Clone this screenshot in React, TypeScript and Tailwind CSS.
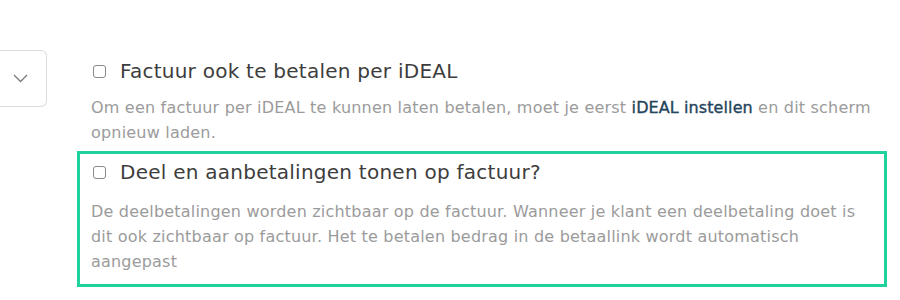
import React from 'react';

const Checkbox: React.FC = () => (
    <span className="inline-block w-[13px] h-[13px] rounded-[3px] border border-[#8a8a8a] bg-white shrink-0" />
);

const App: React.FC = () => {
    return (
        <div className="w-[900px] h-[300px] bg-white overflow-hidden flex items-start" style={{ fontFamily: '"DejaVu Sans", "Noto Sans", sans-serif' }}>
            {/* select stub, cut off by the left edge */}
            <div className="mt-[50px] w-[47px] h-[57px] border-y border-r border-[#dcdcdc] rounded-r-md flex items-center pl-[13px] shrink-0">
                <svg width="15" height="9" viewBox="0 0 15 9" fill="none">
                    <path d="M1 1l6.5 6.5L14 1" stroke="#7a7a7a" strokeWidth="1.3" />
                </svg>
            </div>

            <div className="ml-[30px] mt-[56px] w-[810px] flex flex-col gap-[3px]">
                <div className="border-[3px] border-transparent pl-[11px] pr-[5px]">
                    <label className="flex items-center gap-[14px] h-[24px] pl-[2px]">
                        <Checkbox />
                        <span className="text-[20px] tracking-[0.25px] text-[#3d3d3d] leading-[24px]">Factuur ook te betalen per iDEAL</span>
                    </label>
                    <p className="mt-[12px] text-[16px] tracking-[0.2px] leading-[25px] text-[#9b9b9b] whitespace-nowrap">
                        Om een factuur per iDEAL te kunnen laten betalen, moet je eerst{' '}
                        <a className="text-[#24445a] tracking-[0.1px] [-webkit-text-stroke:0.35px_#24445a]">iDEAL instellen</a> en dit scherm
                        <br />
                        opnieuw laden.
                    </p>
                </div>

                <div className="border-[3px] border-[#1fd19d] pl-[11px] pr-[20px] pt-[6px] pb-[10px]">
                    <label className="flex items-center gap-[14px] h-[24px] pl-[2px]">
                        <Checkbox />
                        <span className="text-[20px] tracking-[0.25px] text-[#3d3d3d] leading-[24px]">Deel en aanbetalingen tonen op factuur?</span>
                    </label>
                    <p className="mt-[15px] text-[16px] tracking-[0.2px] leading-[25px] text-[#9b9b9b] whitespace-nowrap">
                        De deelbetalingen worden zichtbaar op de factuur. Wanneer je klant een deelbetaling doet is
                        <br />
                        dit ook zichtbaar op factuur. Het te betalen bedrag in de betaallink wordt automatisch
                        <br />
                        aangepast
                    </p>
                </div>
            </div>
        </div>
    );
};

export default App;
